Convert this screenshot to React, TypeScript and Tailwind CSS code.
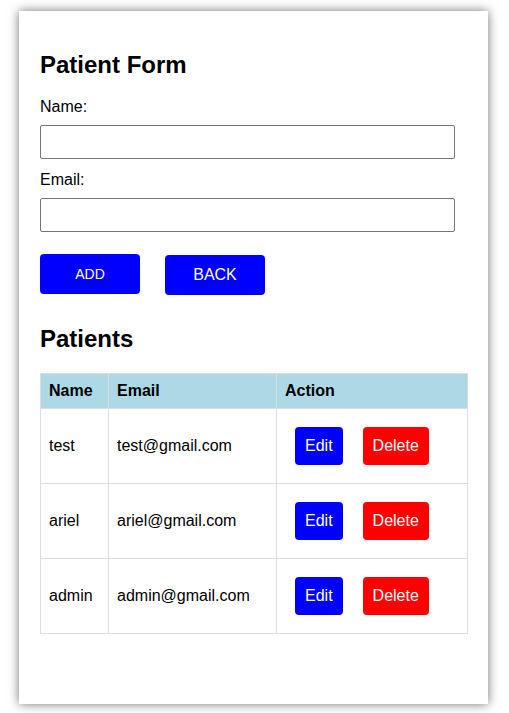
import React from 'react';

const patients = [
  { id: 1, name: 'test', email: 'test@gmail.com' },
  { id: 2, name: 'ariel', email: 'ariel@gmail.com' },
  { id: 3, name: 'admin', email: 'admin@gmail.com' },
];

export default function App() {
  return (
    <div className="min-h-screen bg-white pt-[11px] font-['Liberation_Sans',Arial,sans-serif] text-black">
      <div className="ml-[19px] w-[469px] h-[693px] bg-white px-[21px] pt-[20px] shadow-[0_0_10px_rgba(0,0,0,0.55)]">
        <h2 className="mt-[20px] mb-[19px] text-[24px] leading-[28px] font-bold">Patient Form</h2>

        <label className="block text-[16px] leading-[18px] mb-[9px]">Name:</label>
        <input
          type="text"
          className="block w-[415px] h-[34px] border border-[#767676] rounded-[2px] px-2 mb-[12px] outline-none"
        />
        <label className="block text-[16px] leading-[18px] mb-[9px]">Email:</label>
        <input
          type="text"
          className="block w-[415px] h-[34px] border border-[#767676] rounded-[2px] px-2 outline-none"
        />

        <div className="flex items-start gap-[25px] mt-[22px]">
          <button className="w-[100px] h-[40px] bg-[#0000ff] text-white text-[14px] rounded-[4px]">ADD</button>
          <button className="w-[100px] h-[40px] mt-[1px] bg-[#0000ff] text-white text-[16px] rounded-[4px]">BACK</button>
        </div>

        <h2 className="mt-[30px] mb-[20px] text-[24px] leading-[28px] font-bold">Patients</h2>

        <table className="w-[428px] border-collapse text-[16px] leading-[18px]">
          <thead>
            <tr className="bg-[#add8e6] h-[35px]">
              <th className="w-[68px] border border-[#ddd] px-2 text-left font-bold">Name</th>
              <th className="w-[168px] border border-[#ddd] px-2 text-left font-bold">Email</th>
              <th className="border border-[#ddd] px-2 text-left font-bold">Action</th>
            </tr>
          </thead>
          <tbody>
            {patients.map((p) => (
              <tr key={p.id} className="h-[75px]">
                <td className="border border-[#ddd] px-2">{p.name}</td>
                <td className="border border-[#ddd] px-2">{p.email}</td>
                <td className="border border-[#ddd] px-2">
                  <div className="flex gap-[20px] pl-[10px]">
                    <button className="h-[38px] px-[10px] bg-[#0000ff] text-white rounded-[4px]">Edit</button>
                    <button className="h-[38px] px-[10px] bg-[#ff0000] text-white rounded-[4px]">Delete</button>
                  </div>
                </td>
              </tr>
            ))}
          </tbody>
        </table>
      </div>
    </div>
  );
}
